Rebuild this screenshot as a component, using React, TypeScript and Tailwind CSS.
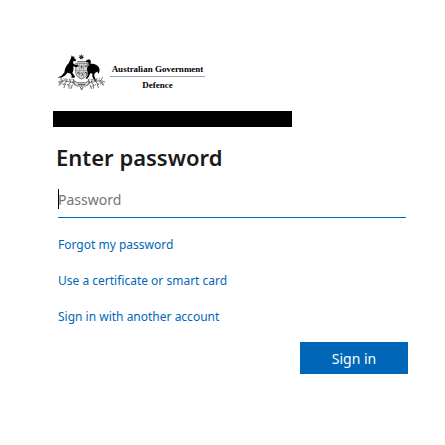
const links = [
  'Forgot my password',
  'Use a certificate or smart card',
  'Sign in with another account',
];

const Crest = () => (
  <svg viewBox="18 16 150 112" className="h-[37px] w-[50px] shrink-0" aria-hidden="true">
    {/* Star and wreath */}
    <path
      d="M94 17l2 4 5-1-2 4 4 3-5 1v5l-4-3-4 3v-5l-5-1 4-3-2-4 5 1z"
      fill="#333"
    />
    <path d="M82 39h25" stroke="#333" strokeWidth="4" strokeDasharray="4 2" />
    {/* Shield */}
    <path
      d="M77 44h36v27c0 11-9 17-18 21-9-4-18-10-18-21z"
      fill="#d4d4d4"
      stroke="#444"
      strokeWidth="2"
    />
    <path d="M77 66h36M89 44v44M101 44v44" stroke="#777" strokeWidth="1.5" />
    <path
      d="M81 49l5 5m0-5l-5 5M92 55h6m-3-5v10M105 50l5 6m0-6l-5 6M81 74l5-3 1 7M92 75c5-6 8 2 3 8M104 73l5-2v8"
      stroke="#333"
      strokeWidth="2.5"
      fill="none"
    />
    {/* Kangaroo */}
    <path
      d="M63 27l2-7 4 6 3-5 1 8 6 5-3 4-6-1-1 7 8 6 6-2 2 4-7 4-8-3 0 12-3 8 8 12-2 3h-8l-3-3 4-1-5-9-9-2-7 8-12 7-11-1 12-5 9-11c1-15 8-22 13-28l5-10z"
      fill="#000"
    />
    {/* Emu */}
    <path
      d="M106 39l5-5 7-2 5 5-1 9c9-2 20 2 25 10 3 6 3 13-1 20l-4-7-8 6-1 7 6 15-5 1-7-15 1-7-7-2-4 10-6 8-4-2 6-10 1-10c-5-6-3-14 2-19l-1-9-6-1z"
      fill="#000"
    />
    {/* Wattle branches */}
    <g fill="none" stroke="#555" strokeWidth="2.5">
      <path d="M24 101c15-8 28-1 40 0s22 4 31 12c9-8 20-11 31-12s25-8 40 0" />
      <path d="M30 91l9 8-12 5m20-14l2 11-10 8m19-18l4 10-8 10m17-19l-3 12 8 8m-42-10l-8 10m19-5l-4 12m15-11l1 13m10-12l-5 13" />
      <path d="M158 91l-9 8 12 5m-21-14l-2 11 10 8m-20-18l-4 10 8 10m-17-19l4 12-8 8m42-10l8 10m-19-5l4 12m-15-11l-1 13m-10-12l5 13" />
    </g>
    <g fill="none" stroke="#777" strokeWidth="4" strokeDasharray="2 3">
      <path d="M29 86c12 8 25 10 42 6M26 108c15-4 30 0 42 9M159 86c-12 8-25 10-42 6M163 108c-15-4-30 0-42 9" />
    </g>
    {/* Scroll */}
    <path
      d="M72 97l10 6h25l10-6v9l-10 7H82l-10-7z"
      fill="#ddd"
      stroke="#333"
      strokeWidth="2"
    />
    <path d="M84 108h22M91 116l4 9 4-9" fill="none" stroke="#333" strokeWidth="2.5" />
  </svg>
);

const Logo = () => (
  <div className="flex items-start gap-1 pl-[3px]">
    <Crest />
    <div className="mt-[10px] flex w-[95px] flex-col text-center font-['Liberation_Serif',serif] text-[9px] leading-[10px] font-bold text-black">
      <span className="border-b border-gray-400 pb-[2px] whitespace-nowrap">
        Australian Government
      </span>
      <span className="pt-[3px]">Defence</span>
    </div>
  </div>
);

export default function App() {
  return (
    <main className="min-h-screen bg-white pt-[54px] pr-[37px] pb-8 pl-[53px] font-['Noto_Sans',sans-serif] text-[#1b1b1b]">
      <Logo />

      {/* Redacted account name */}
      <div className="mt-5 h-4 w-[239px] max-w-full bg-black" />

      <form onSubmit={(e) => e.preventDefault()}>
        <h1 className="mt-4 pl-[3px] text-[22px] leading-7 font-semibold">Enter password</h1>

        <div className="relative mt-4 mr-[2px] ml-[5px]">
          <input
            type="password"
            aria-label="Password"
            placeholder="Password"
            className="block h-[31px] w-full border-b border-[#0067b8] bg-transparent pb-[6px] text-[14px] placeholder:text-[#757575] focus:outline-none"
          />
          <span className="absolute top-[2px] left-0 h-5 w-px bg-black" />
        </div>

        <ul className="mt-[17px] flex flex-col gap-4 pl-[5px] text-[12px] leading-5 text-[#0067b8]">
          {links.map((link) => (
            <li key={link}>
              <a href="#" className="hover:underline">
                {link}
              </a>
            </li>
          ))}
        </ul>

        <div className="mt-[15px] flex justify-end">
          <button type="submit" className="h-8 w-[108px] bg-[#0067b8] text-[14px] text-white">
            Sign in
          </button>
        </div>
      </form>
    </main>
  );
}
